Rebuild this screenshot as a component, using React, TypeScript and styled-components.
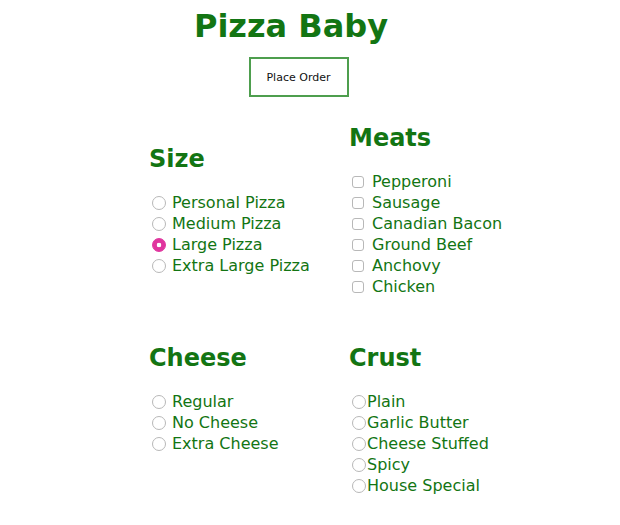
import styled, { createGlobalStyle } from "styled-components";

const GlobalStyle = createGlobalStyle`
  body {
    margin: 0;
    background: #ffffff;
    font-family: "DejaVu Sans", Verdana, sans-serif;
  }
`;

const sizes = ["Personal Pizza", "Medium Pizza", "Large Pizza", "Extra Large Pizza"];
const meats = ["Pepperoni", "Sausage", "Canadian Bacon", "Ground Beef", "Anchovy", "Chicken"];
const cheeses = ["Regular", "No Cheese", "Extra Cheese"];
const crusts = ["Plain", "Garlic Butter", "Cheese Stuffed", "Spicy", "House Special"];

export default function App() {
  return (
    <Page>
      <GlobalStyle />
      <Header>
        <Title>Pizza Baby</Title>
        <OrderButton>Place Order</OrderButton>
      </Header>
      <Menu>
        <Row $align="center">
          <Section>
            <Heading>Size</Heading>
            <List>
              {sizes.map((s) => (
                <Item key={s}>
                  <Radio type="radio" name="size" defaultChecked={s === "Large Pizza"} />
                  {s}
                </Item>
              ))}
            </List>
          </Section>
          <Section>
            <Heading>Meats</Heading>
            <List>
              {meats.map((m) => (
                <Item key={m}>
                  <Check type="checkbox" />
                  {m}
                </Item>
              ))}
            </List>
          </Section>
        </Row>
        <Row $align="start">
          <Section>
            <Heading>Cheese</Heading>
            <List>
              {cheeses.map((c) => (
                <Item key={c}>
                  <Radio type="radio" name="cheese" />
                  {c}
                </Item>
              ))}
            </List>
          </Section>
          <Section>
            <Heading>Crust</Heading>
            <List>
              {crusts.map((c) => (
                <Item key={c} $tight>
                  <Radio type="radio" name="crust" />
                  {c}
                </Item>
              ))}
            </List>
          </Section>
        </Row>
      </Menu>
    </Page>
  );
}

const Page = styled.div`
  padding-top: 8px;
  color: #137513;
`;

const Header = styled.header`
  width: 582px;
  display: flex;
  flex-direction: column;
  align-items: center;
`;

const Title = styled.h1`
  margin: 0;
  font-size: 32px;
  line-height: 37px;
  font-weight: bold;
  color: #137513;
`;

const OrderButton = styled.button`
  margin: 12px 0 0 15px;
  width: 100px;
  height: 40px;
  background: #ffffff;
  border: 2px solid #4e9e4e;
  font-family: "DejaVu Sans", Verdana, sans-serif;
  font-size: 11px;
  color: #111111;
  cursor: pointer;
`;

const Menu = styled.main`
  margin: 27px 0 0 149px;
  display: flex;
  flex-direction: column;
  gap: 47px;
`;

const Row = styled.div<{ $align: string }>`
  display: grid;
  grid-template-columns: 200px 200px;
  align-items: ${(p) => p.$align};
`;

const Section = styled.section`
  display: flex;
  flex-direction: column;
`;

const Heading = styled.h2`
  margin: 0 0 18px;
  font-size: 24px;
  line-height: 29px;
  font-weight: bold;
  color: #137513;
`;

const List = styled.div`
  display: flex;
  flex-direction: column;
`;

const Item = styled.label<{ $tight?: boolean }>`
  display: flex;
  align-items: center;
  height: 21px;
  gap: ${(p) => (p.$tight ? "1px" : "6px")};
  font-size: 16px;
  color: #137513;
`;

const Radio = styled.input`
  appearance: none;
  margin: 0 0 0 3px;
  width: 14px;
  height: 14px;
  border: 1px solid #b8b8b8;
  border-radius: 50%;
  background: #ffffff;

  &:checked {
    border-color: #e0359e;
    background: radial-gradient(circle, #ffffff 0 2px, #e0359e 2.6px);
  }
`;

const Check = styled.input`
  appearance: none;
  margin: 0 2px 0 3px;
  width: 12px;
  height: 12px;
  border: 1px solid #b8b8b8;
  border-radius: 3px;
  background: #ffffff;
`;
